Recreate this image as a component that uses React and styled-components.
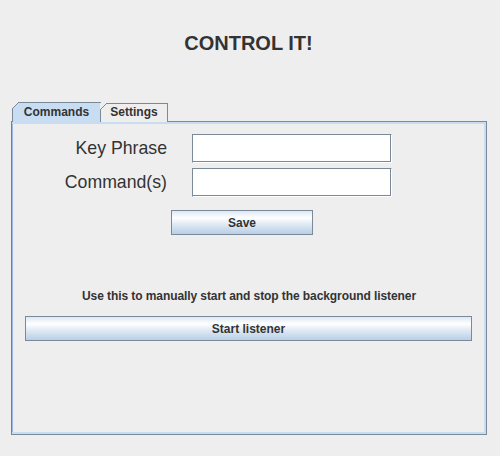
import * as React from "react";
import styled, { createGlobalStyle } from "styled-components";

const GlobalStyle = createGlobalStyle`
  html, body {
    margin: 0;
    padding: 0;
    background: #eeeeee;
  }
  body {
    font-family: "Liberation Sans", Arial, sans-serif;
    color: #333333;
  }
`;

const App = () => {
  return (
    <Frame>
      <GlobalStyle />
      <Title>CONTROL IT!</Title>
      <TabStrip>
        <Tab selected>Commands</Tab>
        <Tab>Settings</Tab>
      </TabStrip>
      <Panel>
        <Form>
          <Label>Key Phrase</Label>
          <Field type="text" />
          <Label>Command(s)</Label>
          <Field type="text" />
        </Form>
        <SaveRow>
          <Button width="142px">Save</Button>
        </SaveRow>
        <Info>Use this to manually start and stop the background listener</Info>
        <ListenerRow>
          <Button>Start listener</Button>
        </ListenerRow>
      </Panel>
    </Frame>
  );
};

const Frame = styled.div`
  width: 500px;
  height: 456px;
  box-sizing: border-box;
  padding-top: 32px;
  overflow: hidden;
`;

const Title = styled.h1`
  margin: 0 0 47px 0;
  padding-right: 3px;
  font-size: 20px;
  line-height: 23px;
  font-weight: bold;
  text-align: center;
  color: #333333;
`;

const TabStrip = styled.div`
  display: flex;
  align-items: flex-end;
  padding-left: 12px;
  height: 20px;
  position: relative;
  z-index: 1;
`;

const Tab = styled.div`
  position: relative;
  box-sizing: border-box;
  height: ${(p) => (p.selected ? "20px" : "19px")};
  width: ${(p) => (p.selected ? "89px" : "68px")};
  margin-left: ${(p) => (p.selected ? "0" : "-1px")};
  border: 1px solid #7a8a99;
  border-bottom: none;
  background: ${(p) => (p.selected ? "#c8ddf2" : "#eeeeee")};
  font-size: 12px;
  font-weight: bold;
  line-height: ${(p) => (p.selected ? "18px" : "17px")};
  text-align: center;
  color: #333333;

  &::before {
    content: "";
    position: absolute;
    top: -1px;
    left: -1px;
    width: 7px;
    height: 7px;
    background: linear-gradient(
      135deg,
      #eeeeee 0,
      #eeeeee calc(50% - 0.6px),
      #7a8a99 calc(50% - 0.6px),
      #7a8a99 calc(50% + 0.6px),
      transparent calc(50% + 0.6px)
    );
  }
`;

const Panel = styled.div`
  box-sizing: border-box;
  margin: -1px 0 0 11px;
  width: 476px;
  height: 314px;
  border: 1px solid #7a8a99;
  border-left-color: #6382bf;
  box-shadow: inset 0 2px 0 #c8ddf2, inset -2px 0 0 #c8ddf2,
    inset 0 -2px 0 #c8ddf2, inset 1px 0 0 #9fb5e0;
`;

const Form = styled.div`
  display: grid;
  grid-template-columns: 155px 200px;
  grid-auto-rows: 29px;
  column-gap: 25px;
  row-gap: 5px;
  padding-top: 12px;
`;

const Label = styled.label`
  align-self: center;
  text-align: right;
  font-size: 17.7px;
  line-height: 21px;
  color: #333333;
`;

const Field = styled.input`
  box-sizing: border-box;
  margin: 0;
  width: 200px;
  height: 29px;
  padding: 0 4px;
  border: 1px solid;
  border-color: #7a8a99 #ffffff #ffffff #7a8a99;
  box-shadow: inset -1px -1px 0 #7a8a99;
  background: #ffffff;
  font-family: "Liberation Sans", Arial, sans-serif;
  font-size: 12px;
  outline: none;
`;

const SaveRow = styled.div`
  display: flex;
  padding: 13px 0 0 159px;
`;

const Button = styled.button`
  box-sizing: border-box;
  width: ${(p) => p.width || "100%"};
  height: 25px;
  margin: 0;
  padding: 0;
  border: 1px solid #7a8a99;
  background: linear-gradient(
    #dde8f3 0%,
    #ffffff 30%,
    #dde8f3 60%,
    #b8cfe5 100%
  );
  font-family: "Liberation Sans", Arial, sans-serif;
  font-size: 12px;
  font-weight: bold;
  color: #333333;
`;

const Info = styled.div`
  margin-top: 54px;
  font-size: 12px;
  line-height: 14px;
  font-weight: bold;
  letter-spacing: -0.08px;
  text-align: center;
  color: #333333;
`;

const ListenerRow = styled.div`
  display: flex;
  margin: 13px 14px 0 13px;
`;

export default App;
